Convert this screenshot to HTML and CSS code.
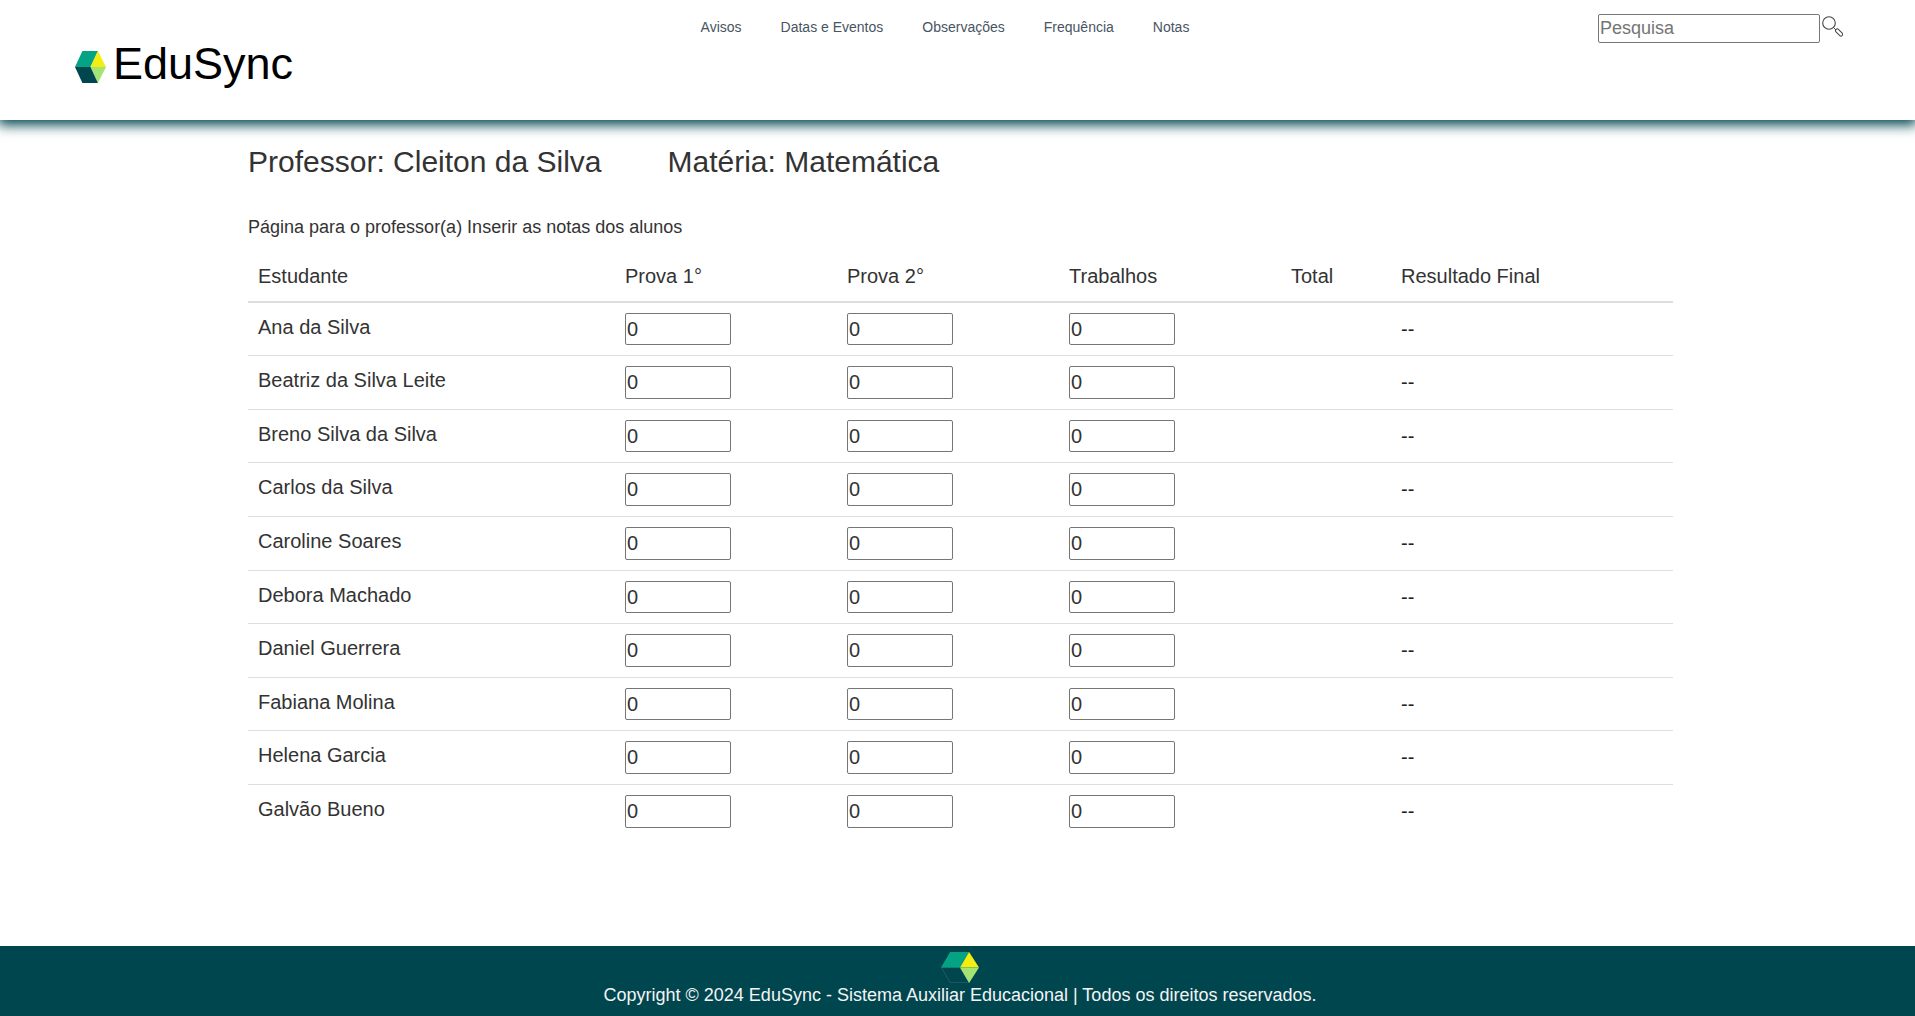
FILE: index.html
```html
<!DOCTYPE html>
<html lang="pt-BR">
<head>
<meta charset="utf-8">
<meta name="viewport" content="width=device-width, initial-scale=1">
<title>EduSync - Notas</title>
<link rel="stylesheet" href="styles.css">
</head>
<body>
<header class="header">
  <a class="brand" href="#">
    <svg class="brand-icon" viewBox="0 0 92 96" preserveAspectRatio="none" aria-hidden="true">
      <path fill="#03a383" d="M22 0H68L46 48H0z"/>
      <path fill="#f2ee12" d="M68 0L92 48H46z"/>
      <path fill="#a4e473" d="M46 48H92L68 96z"/>
      <path fill="#00464f" d="M0 48H46L68 96H22z"/>
    </svg>
    <span class="brand-name">EduSync</span>
  </a>
  <nav class="nav" aria-label="Principal">
    <a href="#">Avisos</a>
    <a href="#">Datas e Eventos</a>
    <a href="#">Observações</a>
    <a href="#">Frequência</a>
    <a href="#">Notas</a>
  </nav>
  <form class="search" role="search">
    <input class="search-input" type="search" placeholder="Pesquisa" aria-label="Pesquisa">
    <button class="search-button" type="button" aria-label="Pesquisar">
      <svg viewBox="0 0 21 21" aria-hidden="true" fill="none" stroke="#444">
        <circle cx="7" cy="7" r="6.3" stroke-width="1.1"/>
        <path d="M11.5 11.5L14 14"/>
        <rect x="12.8" y="14.8" width="8.6" height="3.4" rx="1.6" transform="rotate(45 17.1 16.5)"/>
      </svg>
    </button>
  </form>
</header>

<main class="main">
  <div class="course">
    <h1 class="course-title">Professor: Cleiton da Silva</h1>
    <h2 class="course-title">Matéria: Matemática</h2>
  </div>
  <p class="intro">Página para o professor(a) Inserir as notas dos alunos</p>
  <table class="grades">
    <colgroup>
      <col class="col-student"><col class="col-grade"><col class="col-grade"><col class="col-grade"><col class="col-total"><col>
    </colgroup>
    <thead>
      <tr><th scope="col">Estudante</th><th scope="col">Prova 1°</th><th scope="col">Prova 2°</th><th scope="col">Trabalhos</th><th scope="col">Total</th><th scope="col">Resultado Final</th></tr>
    </thead>
    <tbody>
      <tr><td>Ana da Silva</td><td><input type="number" value="0" aria-label="Prova 1, Ana da Silva"></td><td><input type="number" value="0" aria-label="Prova 2, Ana da Silva"></td><td><input type="number" value="0" aria-label="Trabalhos, Ana da Silva"></td><td></td><td class="result">--</td></tr>
      <tr><td>Beatriz da Silva Leite</td><td><input type="number" value="0" aria-label="Prova 1, Beatriz da Silva Leite"></td><td><input type="number" value="0" aria-label="Prova 2, Beatriz da Silva Leite"></td><td><input type="number" value="0" aria-label="Trabalhos, Beatriz da Silva Leite"></td><td></td><td class="result">--</td></tr>
      <tr><td>Breno Silva da Silva</td><td><input type="number" value="0" aria-label="Prova 1, Breno Silva da Silva"></td><td><input type="number" value="0" aria-label="Prova 2, Breno Silva da Silva"></td><td><input type="number" value="0" aria-label="Trabalhos, Breno Silva da Silva"></td><td></td><td class="result">--</td></tr>
      <tr><td>Carlos da Silva</td><td><input type="number" value="0" aria-label="Prova 1, Carlos da Silva"></td><td><input type="number" value="0" aria-label="Prova 2, Carlos da Silva"></td><td><input type="number" value="0" aria-label="Trabalhos, Carlos da Silva"></td><td></td><td class="result">--</td></tr>
      <tr><td>Caroline Soares</td><td><input type="number" value="0" aria-label="Prova 1, Caroline Soares"></td><td><input type="number" value="0" aria-label="Prova 2, Caroline Soares"></td><td><input type="number" value="0" aria-label="Trabalhos, Caroline Soares"></td><td></td><td class="result">--</td></tr>
      <tr><td>Debora Machado</td><td><input type="number" value="0" aria-label="Prova 1, Debora Machado"></td><td><input type="number" value="0" aria-label="Prova 2, Debora Machado"></td><td><input type="number" value="0" aria-label="Trabalhos, Debora Machado"></td><td></td><td class="result">--</td></tr>
      <tr><td>Daniel Guerrera</td><td><input type="number" value="0" aria-label="Prova 1, Daniel Guerrera"></td><td><input type="number" value="0" aria-label="Prova 2, Daniel Guerrera"></td><td><input type="number" value="0" aria-label="Trabalhos, Daniel Guerrera"></td><td></td><td class="result">--</td></tr>
      <tr><td>Fabiana Molina</td><td><input type="number" value="0" aria-label="Prova 1, Fabiana Molina"></td><td><input type="number" value="0" aria-label="Prova 2, Fabiana Molina"></td><td><input type="number" value="0" aria-label="Trabalhos, Fabiana Molina"></td><td></td><td class="result">--</td></tr>
      <tr><td>Helena Garcia</td><td><input type="number" value="0" aria-label="Prova 1, Helena Garcia"></td><td><input type="number" value="0" aria-label="Prova 2, Helena Garcia"></td><td><input type="number" value="0" aria-label="Trabalhos, Helena Garcia"></td><td></td><td class="result">--</td></tr>
      <tr><td>Galvão Bueno</td><td><input type="number" value="0" aria-label="Prova 1, Galvão Bueno"></td><td><input type="number" value="0" aria-label="Prova 2, Galvão Bueno"></td><td><input type="number" value="0" aria-label="Trabalhos, Galvão Bueno"></td><td></td><td class="result">--</td></tr>
    </tbody>
  </table>
</main>

<footer class="footer">
  <svg class="footer-icon" viewBox="0 0 92 96" preserveAspectRatio="none" aria-hidden="true">
    <path fill="#00464f" stroke="#2c6570" stroke-width="2" d="M1 48H46L68 95H22z"/>
    <path fill="#03a383" d="M22 0H68L46 48H0z"/>
    <path fill="#f2ee12" d="M68 0L92 48H46z"/>
    <path fill="#a4e473" d="M46 48H92L68 96z"/>
  </svg>
  <p class="copyright">Copyright © 2024 EduSync - Sistema Auxiliar Educacional | Todos os direitos reservados.</p>
</footer>
</body>
</html>
```
FILE: styles.css
```css
* {
  box-sizing: border-box;
}

body {
  display: flex;
  flex-direction: column;
  min-height: 100vh;
  margin: 0;
  background: #fff;
  color: #333;
  font-family: "Liberation Sans", Arial, sans-serif;
  font-size: 18px;
}

h1,
h2,
p {
  margin: 0;
  font-weight: 400;
}

.header {
  display: grid;
  grid-template-columns: 1fr auto 1fr;
  align-items: start;
  min-height: 120px;
  padding: 14px 72px 0 75px;
  background: #fff;
  box-shadow: 0 3px 12px 2px #00464f;
}

.brand {
  display: flex;
  align-items: center;
  gap: 7px;
  margin-top: 24px;
  color: #000;
  text-decoration: none;
}

.brand-icon {
  width: 31px;
  height: 32px;
  margin-top: 6px;
}

.brand-name {
  font-size: 45px;
  line-height: 52px;
}

.nav {
  display: flex;
  gap: 39px;
  margin-right: 28px;
  font-size: 14px;
  line-height: 26px;
}

.nav a {
  color: #475562;
  text-decoration: none;
}

.search {
  display: flex;
  justify-content: flex-end;
  gap: 2px;
}

.search-input {
  width: 222px;
  height: 29px;
  padding: 1px;
  border: 1px solid #767676;
  border-radius: 2px;
  background: #fff;
  font: inherit;
  appearance: none;
}

.search-input::placeholder {
  color: #757575;
}

.search-button {
  width: 21px;
  height: 21px;
  margin-top: 2px;
  padding: 0;
  border: 0;
  background: none;
  cursor: pointer;
}

.search-button svg {
  display: block;
}

.main {
  flex: 1;
  padding: 22px 242px 32px 248px;
}

.course {
  display: flex;
  gap: 66px;
}

.course-title {
  font-size: 30px;
  line-height: 40px;
}

.intro {
  margin: 32px 0 12px;
  line-height: 26px;
}

.grades {
  width: 100%;
  table-layout: fixed;
  border-collapse: collapse;
  font-size: 20px;
  line-height: 1.43;
}

.col-student {
  width: 367px;
}

.col-grade {
  width: 222px;
}

.col-total {
  width: 110px;
}

.grades th,
.grades td {
  padding: 10px;
  font-weight: 400;
  text-align: left;
  vertical-align: top;
}

.grades th {
  border-bottom: 2px solid #ddd;
}

.grades td {
  border-top: 1px solid #ddd;
}

.grades .result {
  vertical-align: middle;
  color: #222;
}

.grades input {
  display: block;
  width: 106px;
  padding: 1px;
  border: 1px solid #767676;
  border-radius: 2px;
  background: #fff;
  color: inherit;
  font: inherit;
}

.footer {
  display: flex;
  flex-direction: column;
  align-items: center;
  padding: 6px 0 8px 5px;
  background: #00464f;
  color: #f4f4f4;
}

.footer-icon {
  width: 38px;
  height: 31px;
}

.copyright {
  line-height: 25px;
}
```
